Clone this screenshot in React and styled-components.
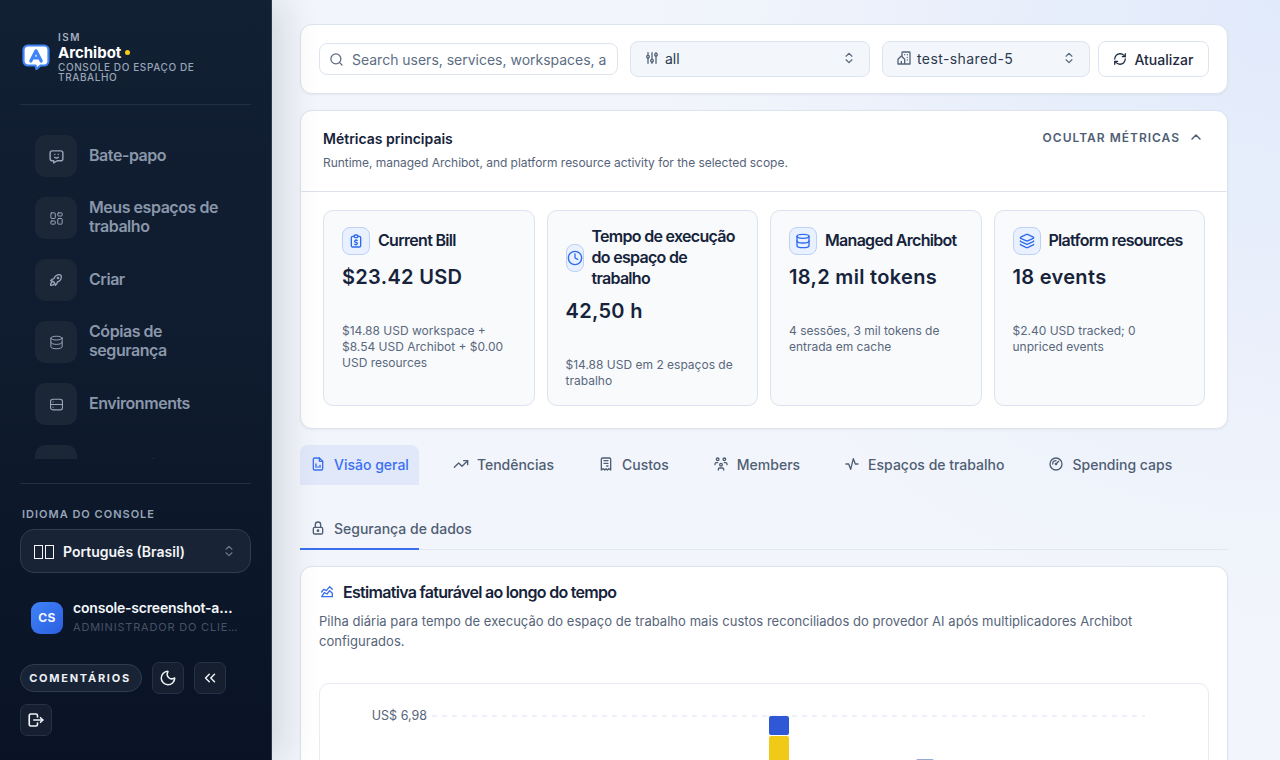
import React from 'react'
import styled, { createGlobalStyle } from 'styled-components'
import {
  Search, ChevronsUpDown, RefreshCw, ChevronUp, Clock, Database, Layers,
  LayoutDashboard, Moon, ChevronsLeft, TrendingUp,
} from 'lucide-react'
import {
  TbMessageChatbot, TbBuildingCommunity, TbReportMoney, TbFileAnalytics, TbReceipt,
  TbUsersGroup, TbGauge, TbLock, TbChartAreaLine, TbLogout, TbRocket, TbAdjustments, TbActivity,
} from 'react-icons/tb'

const GlobalStyle = createGlobalStyle`
  html, body { margin: 0; height: 100%; overflow: hidden; }
  body { font-family: Inter, "Noto Sans", sans-serif; color: #16233a; }
  #root { height: 100%; }
  * { box-sizing: border-box; }
`

const Page = styled.div`
  display: flex;
  height: 760px;
  overflow: hidden;
  background: radial-gradient(circle 620px at 100% 0, #e1eafb 0%, rgba(225, 234, 251, 0) 100%), #f2f5fb;
`

const Sidebar = styled.aside`
  width: 272px;
  flex-shrink: 0;
  display: flex;
  flex-direction: column;
  padding: 0 20px;
  position: relative;
  z-index: 2;
  background: linear-gradient(180deg, #122033 0%, #0f1b2e 45%, #091325 100%);
  border-right: 1px solid #2a3950;
  box-shadow: 10px 0 36px rgba(15, 23, 42, 0.14);
`

const Brand = styled.div`
  height: 105px;
  flex-shrink: 0;
  display: flex;
  align-items: center;
  gap: 8px;
  padding: 8px 2px 0;
  border-bottom: 1px solid #222f43;
  svg { margin-top: 2px; flex-shrink: 0; }
`

const BrandText = styled.div`
  display: flex;
  flex-direction: column;
`

const BrandKicker = styled.span`
  font-size: 10px;
  line-height: 12px;
  font-weight: 600;
  letter-spacing: 1.5px;
  color: #a3afc0;
`

const BrandName = styled.span`
  font-size: 15px;
  line-height: 19px;
  font-weight: 700;
  color: #fff;
  display: flex;
  align-items: center;
  gap: 4px;
`

const BrandDot = styled.i`
  width: 5px;
  height: 5px;
  border-radius: 50%;
  background: #facc15;
  margin-top: 1px;
`

const BrandSub = styled.span`
  font-size: 10px;
  line-height: 10px;
  font-weight: 500;
  letter-spacing: 0.6px;
  text-transform: uppercase;
  color: #98a5b7;
`

const Nav = styled.nav`
  height: 354px;
  flex-shrink: 0;
  overflow: hidden;
  padding: 30px 0 0 15px;
  display: flex;
  flex-direction: column;
  gap: 20px;
`

const NavItem = styled.a`
  display: flex;
  align-items: center;
  gap: 12px;
  flex-shrink: 0;
  min-height: 42px;
  font-size: 16px;
  line-height: 19px;
  font-weight: 600;
  letter-spacing: -0.45px;
  color: #8a97aa;
`

const NavLabel = styled.span`
  max-width: 140px;
  padding-bottom: 2px;
`

const NavIcon = styled.span`
  width: 42px;
  height: 42px;
  flex-shrink: 0;
  display: flex;
  align-items: center;
  justify-content: center;
  border-radius: 10px;
  background: #1b2637;
  color: #9aa6b7;
`

const Footer = styled.div`
  margin-top: 24px;
  border-top: 1px solid #222f43;
  padding-top: 24px;
`

const FooterLabel = styled.div`
  font-size: 11px;
  line-height: 13px;
  font-weight: 600;
  letter-spacing: 1px;
  text-transform: uppercase;
  color: #98a5b7;
  padding-left: 2px;
`

const LangSelect = styled.div`
  margin-top: 8px;
  height: 44px;
  display: flex;
  align-items: center;
  padding: 0 14px 0 13px;
  border: 1px solid #303c50;
  border-radius: 14px;
  background: #182335;
  color: #f4f6fa;
  font-size: 14px;
  font-weight: 600;
  svg { margin-left: auto; color: #6b7a8e; }
`

const Tofu = styled.span`
  display: flex;
  gap: 2px;
  margin: 2px 9px 0 0;
`

const TofuBox = styled.i`
  width: 9px;
  height: 14px;
  border: 1px solid #f4f6fa;
`

const UserRow = styled.div`
  display: flex;
  align-items: center;
  gap: 10px;
  margin-top: 27px;
  padding: 0 11px;
`

const Avatar = styled.div`
  width: 32px;
  height: 32px;
  flex-shrink: 0;
  display: flex;
  align-items: center;
  justify-content: center;
  border-radius: 9px;
  background: linear-gradient(135deg, #3f83f8, #2b5fe0);
  color: #f4f7ff;
  font-size: 12px;
  font-weight: 700;
  letter-spacing: 0.4px;
`

const UserText = styled.div`
  min-width: 0;
  flex: 1;
`

const UserName = styled.div`
  font-size: 14px;
  line-height: 16px;
  font-weight: 600;
  letter-spacing: -0.2px;
  color: #f4f6fa;
  white-space: nowrap;
  overflow: hidden;
  text-overflow: ellipsis;
`

const UserRole = styled.div`
  margin-top: 3px;
  font-size: 11px;
  line-height: 16px;
  letter-spacing: 0.8px;
  text-transform: uppercase;
  color: #465267;
  white-space: nowrap;
  overflow: hidden;
  text-overflow: ellipsis;
`

const Actions = styled.div`
  margin-top: 27px;
  display: flex;
  flex-wrap: wrap;
  align-items: center;
  gap: 10px;
`

const Pill = styled.button`
  width: 122px;
  height: 28px;
  padding: 0 2px 0 0;
  font: 700 11px Inter, sans-serif;
  letter-spacing: 1.75px;
  color: #eef1f6;
  background: #182335;
  border: 1px solid #303c50;
  border-radius: 14px;
`

const IconBtn = styled.button`
  width: 32px;
  height: 32px;
  padding: 0;
  display: flex;
  align-items: center;
  justify-content: center;
  color: #eef1f6;
  background: #151f30;
  border: 1px solid #263245;
  border-radius: 7px;
`

const Main = styled.main`
  flex: 1;
  min-width: 0;
  padding: 24px 52px 0 28px;
  display: flex;
  flex-direction: column;
  overflow: hidden;
`

const Card = styled.section`
  flex-shrink: 0;
  background: #fff;
  border: 1px solid #dde4f0;
  border-radius: 12px;
  box-shadow: 0 1px 3px rgba(15, 23, 42, 0.05);
`

const Toolbar = styled(Card)`
  height: 70px;
  display: flex;
  align-items: center;
  gap: 12px;
  padding: 0 18px;
`

const SearchBox = styled.div`
  width: 299px;
  height: 32px;
  display: flex;
  align-items: center;
  gap: 8px;
  padding: 0 12px 0 9px;
  border: 1px solid #dde4f0;
  border-radius: 8px;
  font-size: 14px;
  letter-spacing: -0.01px;
  color: #5d6d83;
  white-space: nowrap;
  overflow: hidden;
  svg { flex-shrink: 0; color: #5b6a80; }
`

const SelectBox = styled.div`
  width: ${p => p.$width}px;
  height: 36px;
  display: flex;
  align-items: center;
  gap: 5px;
  padding: 0 13px 2px;
  border: 1px solid #dde4f0;
  border-radius: 8px;
  background: #f3f6fa;
  font-size: 14px;
  color: #2b3a50;
  svg { color: #55647a; flex-shrink: 0; }
  svg:last-child { margin-left: auto; }
`

const SelectText = styled.span`
  letter-spacing: ${p => p.$spaced ? '0.4px' : '0'};
`

const RefreshButton = styled.button`
  width: 111px;
  height: 36px;
  margin-left: -4px;
  display: flex;
  align-items: center;
  justify-content: center;
  gap: 7px;
  font: 500 14px Inter, sans-serif;
  color: #1e2b40;
  background: #fff;
  border: 1px solid #dde4f0;
  border-radius: 8px;
`

const MetricsCard = styled(Card)`
  margin-top: 16px;
`

const MetricsHead = styled.header`
  height: 81px;
  display: flex;
  justify-content: space-between;
  padding: 19px 23px 0 22px;
  border-bottom: 1px solid #dde2ea;
`

const MetricsTitle = styled.h2`
  margin: 0;
  font-size: 14px;
  line-height: 18px;
  font-weight: 600;
  color: #16233a;
`

const MetricsSub = styled.p`
  margin: 7px 0 0;
  font-size: 12px;
  line-height: 16px;
  letter-spacing: -0.03px;
  color: #566479;
`

const HideToggle = styled.div`
  display: flex;
  align-items: center;
  gap: 8px;
  height: 16px;
  margin-top: -1px;
  font-size: 12px;
  font-weight: 600;
  letter-spacing: 1px;
  text-transform: uppercase;
  color: #4f5e74;
`

const MetricGrid = styled.div`
  display: grid;
  grid-template-columns: repeat(4, 1fr);
  gap: 12px;
  padding: 18px 22px 22px;
`

const Metric = styled.article`
  padding: 16px 18px;
  border: 1px solid #dbe3f0;
  border-radius: 10px;
  background: #f8fafc;
  min-width: 0;
`

const MetricHead = styled.div`
  display: flex;
  align-items: center;
  gap: 8px;
`

const MetricIcon = styled.span`
  width: 28px;
  height: 28px;
  flex-shrink: 1;
  min-width: 0;
  display: flex;
  align-items: center;
  justify-content: center;
  border: 1px solid #bcd0f8;
  border-radius: 8px;
  background: #e9f0ff;
  color: #2f6bed;
  svg { flex-shrink: 0; }
`

const MetricTitle = styled.h3`
  margin: -1px 0 1px;
  font-size: 16px;
  line-height: 20.8px;
  font-weight: 600;
  letter-spacing: -0.7px;
  color: #16233a;
  flex-shrink: 0;
  max-width: calc(100% - 26px);
`

const MetricValue = styled.div`
  margin-top: 8px;
  font-size: 20px;
  line-height: 28px;
  font-weight: 600;
  letter-spacing: 0.32px;
  color: #16233a;
`

const MetricNote = styled.p`
  margin: 32px 0 0;
  font-size: 12px;
  line-height: 16px;
  color: #5a687d;
`

const Tabs = styled.div`
  position: relative;
  margin-top: 16px;
  display: flex;
  flex-wrap: wrap;
  column-gap: 24px;
  row-gap: 24px;
  border-bottom: 1px solid #e0e6f2;
  flex-shrink: 0;
`

const Tab = styled.a`
  height: 40px;
  display: flex;
  align-items: center;
  gap: 8px;
  padding: 0 10px 2px;
  border-radius: 8px 8px 0 0;
  font-size: 14px;
  font-weight: 500;
  color: ${p => p.$active ? '#3b6ff0' : '#4f5e74'};
  background: ${p => p.$active ? '#e0e8f9' : 'transparent'};
`

const TabLine = styled.i`
  position: absolute;
  left: 0;
  bottom: -1px;
  width: 119px;
  height: 2px;
  background: #3b6ff0;
`

const ChartCard = styled(Card)`
  margin-top: 16px;
  padding: 15px 18px 0;
`

const ChartTitle = styled.h3`
  margin: 0;
  display: flex;
  align-items: center;
  gap: 8px;
  font-size: 16px;
  line-height: 20px;
  font-weight: 600;
  letter-spacing: -0.7px;
  color: #16233a;
  svg { color: #3b6ff0; }
`

const ChartSub = styled.p`
  margin: 9px 0 0;
  font-size: 13px;
  line-height: 20px;
  letter-spacing: 0.04px;
  color: #566479;
`

const ChartBox = styled.div`
  margin-top: 32px;
  height: 320px;
  border: 1px solid #e8ebf2;
  border-radius: 10px;
  svg { display: block; }
`

const nav = [
  { icon: <TbMessageChatbot size={17} />, label: 'Bate-papo' },
  { icon: <LayoutDashboard size={15} strokeWidth={1.6} />, label: 'Meus espaços de trabalho' },
  { icon: <TbRocket size={16} />, label: 'Criar' },
  { icon: <Database size={15} strokeWidth={1.6} />, label: 'Cópias de segurança' },
  { icon: <DriveIcon />, label: 'Environments' },
  { icon: null, label: 'Integrações' },
]

const metrics = [
  { icon: <TbReportMoney size={16} />, title: 'Current Bill', value: '$23.42 USD', note: '$14.88 USD workspace + $8.54 USD Archibot + $0.00 USD resources' },
  { icon: <Clock size={16} />, title: 'Tempo de execução do espaço de trabalho', value: '42,50 h', note: '$14.88 USD em 2 espaços de trabalho' },
  { icon: <Database size={16} />, title: 'Managed Archibot', value: '18,2 mil tokens', note: '4 sessões, 3 mil tokens de entrada em cache' },
  { icon: <Layers size={16} />, title: 'Platform resources', value: '18 events', note: '$2.40 USD tracked; 0 unpriced events' },
]

const tabs = [
  { icon: <TbFileAnalytics size={16} />, label: 'Visão geral', active: true },
  { icon: <TrendingUp size={16} />, label: 'Tendências' },
  { icon: <TbReceipt size={16} />, label: 'Custos' },
  { icon: <TbUsersGroup size={16} />, label: 'Members' },
  { icon: <TbActivity size={16} />, label: 'Espaços de trabalho' },
  { icon: <TbGauge size={16} />, label: 'Spending caps' },
  { icon: <TbLock size={16} />, label: 'Segurança de dados' },
]

function DriveIcon() {
  return (
    <svg width="15" height="15" viewBox="0 0 24 24" fill="none" stroke="currentColor" strokeWidth="1.800" strokeLinecap="round">
      <rect x="2.500" y="3.500" width="19" height="17" rx="3.500" />
      <path d="M2.500 12h19M6.500 7.800h.01M6.500 16.200h.01" />
    </svg>
  )
}

function Logo() {
  return (
    <svg width="28" height="26" viewBox="0 0 28 26">
      <path d="M6 1.500h16a4.500 4.500 0 0 1 4.500 4.500v11a4.500 4.500 0 0 1-4.500 4.500h-3.500L14.500 25l-1-3.500H6A4.500 4.500 0 0 1 1.500 17V6A4.500 4.500 0 0 1 6 1.500z" fill="#fff" stroke="#3f83f8" strokeWidth="2.200" />
      <path d="M8.800 17 14 6.800 19.200 17M11 14h6" fill="none" stroke="#3f83f8" strokeWidth="3.200" strokeLinecap="round" strokeLinejoin="round" />
    </svg>
  )
}

function Chart() {
  return (
    <svg width="888" height="318" viewBox="0 0 888 318">
      <text x="107" y="36" textAnchor="end" fontFamily="Inter, sans-serif" fontSize="12.500" fill="#566479">US$ 6,98</text>
      <line x1="112" y1="32" x2="825" y2="32" stroke="#e8ebf4" strokeWidth="1.500" strokeDasharray="5 5" />
      <rect x="449" y="32" width="20" height="19" rx="2" fill="#2f58d6" />
      <rect x="449" y="52" width="20" height="200" rx="2" fill="#f0ca16" />
      <rect x="596" y="75" width="18" height="60" rx="2" fill="#98a9d8" />
    </svg>
  )
}

export default function App() {
  return (
    <Page>
      <GlobalStyle />
      <Sidebar>
        <Brand>
          <Logo />
          <BrandText>
            <BrandKicker>ISM</BrandKicker>
            <BrandName>Archibot<BrandDot /></BrandName>
            <BrandSub>Console do espaço de trabalho</BrandSub>
          </BrandText>
        </Brand>
        <Nav>
          {nav.map(item => (
            <NavItem key={item.label}>
              <NavIcon>{item.icon}</NavIcon>
              <NavLabel>{item.label}</NavLabel>
            </NavItem>
          ))}
        </Nav>
        <Footer>
          <FooterLabel>Idioma do console</FooterLabel>
          <LangSelect>
            <Tofu><TofuBox /><TofuBox /></Tofu>
            Português (Brasil)
            <ChevronsUpDown size={14} />
          </LangSelect>
          <UserRow>
            <Avatar>CS</Avatar>
            <UserText>
              <UserName>console-screenshot-admin</UserName>
              <UserRole>Administrador do cliente</UserRole>
            </UserText>
          </UserRow>
          <Actions>
            <Pill>COMENTÁRIOS</Pill>
            <IconBtn><Moon size={18} /></IconBtn>
            <IconBtn><ChevronsLeft size={18} /></IconBtn>
            <IconBtn><TbLogout size={18} strokeWidth={2.200} /></IconBtn>
          </Actions>
        </Footer>
      </Sidebar>
      <Main>
        <Toolbar>
          <SearchBox>
            <Search size={15} />
            Search users, services, workspaces, a
          </SearchBox>
          <SelectBox $width={240}>
            <TbAdjustments size={16} />
            <SelectText>all</SelectText>
            <ChevronsUpDown size={14} />
          </SelectBox>
          <SelectBox $width={208}>
            <TbBuildingCommunity size={16} />
            <SelectText $spaced>test-shared-5</SelectText>
            <ChevronsUpDown size={14} />
          </SelectBox>
          <RefreshButton><RefreshCw size={14} strokeWidth={2.200} />Atualizar</RefreshButton>
        </Toolbar>
        <MetricsCard>
          <MetricsHead>
            <div>
              <MetricsTitle>Métricas principais</MetricsTitle>
              <MetricsSub>Runtime, managed Archibot, and platform resource activity for the selected scope.</MetricsSub>
            </div>
            <HideToggle>Ocultar métricas<ChevronUp size={16} strokeWidth={2.200} /></HideToggle>
          </MetricsHead>
          <MetricGrid>
            {metrics.map(m => (
              <Metric key={m.title}>
                <MetricHead>
                  <MetricIcon>{m.icon}</MetricIcon>
                  <MetricTitle>{m.title}</MetricTitle>
                </MetricHead>
                <MetricValue>{m.value}</MetricValue>
                <MetricNote>{m.note}</MetricNote>
              </Metric>
            ))}
          </MetricGrid>
        </MetricsCard>
        <Tabs>
          {tabs.map(t => (
            <Tab key={t.label} $active={t.active}>{t.icon}{t.label}</Tab>
          ))}
          <TabLine />
        </Tabs>
        <ChartCard>
          <ChartTitle><TbChartAreaLine size={16} />Estimativa faturável ao longo do tempo</ChartTitle>
          <ChartSub>Pilha diária para tempo de execução do espaço de trabalho mais custos reconciliados do provedor AI após multiplicadores Archibot configurados.</ChartSub>
          <ChartBox><Chart /></ChartBox>
        </ChartCard>
      </Main>
    </Page>
  )
}
